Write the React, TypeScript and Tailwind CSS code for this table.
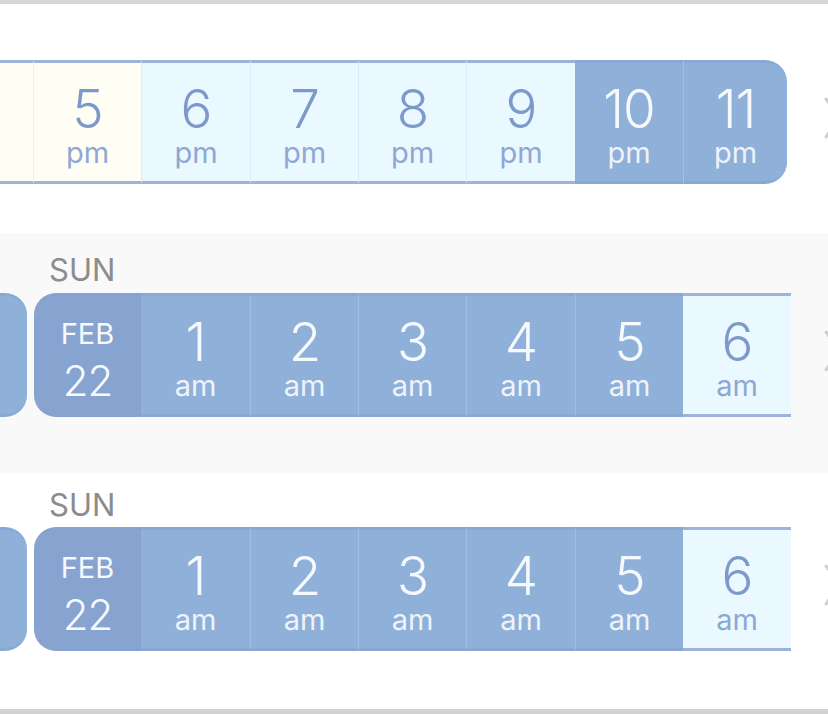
import React from "react";

type Tone = "yellow" | "light" | "dark" | "date";

interface Cell {
  top: string;
  sub: string;
  tone: Tone;
  cls: string;
}

const toneCls: Record<Tone, string> = {
  yellow: "bg-[#fffef4] border-y-[#9cb4da] text-[#7d99ca]",
  light: "bg-[#eaf8ff] border-y-[#9cb4da] text-[#7d99ca]",
  dark: "bg-[#8fb0d8] border-y-[#89a9d3] text-[#f6f9fd]",
  date: "bg-[#87a3cf] border-y-[#86a2ce] text-[#f6f9fd]",
};

const subCls: Record<Tone, string> = {
  yellow: "text-[#8ea7d3]",
  light: "text-[#8ea7d3]",
  dark: "text-[#eef3fb]",
  date: "text-[#eef3fb]",
};

const evening: Cell[] = [
  { top: "4", sub: "pm", tone: "yellow", cls: "w-[108px]" },
  { top: "5", sub: "pm", tone: "yellow", cls: "w-[108px] border-l border-l-[#f1f1e4]" },
  { top: "6", sub: "pm", tone: "light", cls: "w-[109px] border-l border-l-[#dcedf8]" },
  { top: "7", sub: "pm", tone: "light", cls: "w-[108px] border-l border-l-[#dcedf8]" },
  { top: "8", sub: "pm", tone: "light", cls: "w-[108px] border-l border-l-[#dcedf8]" },
  { top: "9", sub: "pm", tone: "light", cls: "w-[109px] border-l border-l-[#dcedf8]" },
  { top: "10", sub: "pm", tone: "dark", cls: "w-[108px]" },
  { top: "11", sub: "pm", tone: "dark", cls: "w-[104px] rounded-r-[22px] border-l border-l-[#a4bee1]" },
];

const night: Cell[] = [
  { top: "", sub: "", tone: "dark", cls: "w-[102px] mr-[7px] rounded-r-[22px]" },
  { top: "FEB", sub: "22", tone: "date", cls: "w-[107px] rounded-l-[22px]" },
  { top: "1", sub: "am", tone: "dark", cls: "w-[109px]" },
  { top: "2", sub: "am", tone: "dark", cls: "w-[108px] border-l border-l-[#a4bee1]" },
  { top: "3", sub: "am", tone: "dark", cls: "w-[108px] border-l border-l-[#a4bee1]" },
  { top: "4", sub: "am", tone: "dark", cls: "w-[109px] border-l border-l-[#a4bee1]" },
  { top: "5", sub: "am", tone: "dark", cls: "w-[108px] border-l border-l-[#a4bee1]" },
  { top: "6", sub: "am", tone: "light", cls: "w-[108px]" },
];

function HourCell({ cell }: { cell: Cell }) {
  const base = "flex h-[124px] shrink-0 flex-col items-center border-y-[3px] leading-none";
  if (cell.tone === "date") {
    return (
      <div className={`${base} ${toneCls.date} ${cell.cls} pt-[23px]`}>
        <span className="text-[29px] leading-[30px]">{cell.top}</span>
        <span className="mt-[10px] text-[42px] font-light leading-[43px] tracking-[-1px]">{cell.sub}</span>
      </div>
    );
  }
  return (
    <div className={`${base} ${toneCls[cell.tone]} ${cell.cls} pt-[19px]`}>
      <span className="text-[53px] font-light leading-[54px] tracking-[-1px]">{cell.top}</span>
      <span className={`mt-[1px] text-[29px] leading-[31px] ${subCls[cell.tone]}`}>{cell.sub}</span>
    </div>
  );
}

function Chevron() {
  return (
    <svg width="20" height="48" viewBox="0 0 20 48" className="shrink-0">
      <path d="M3 4 L16 22 L3 42" fill="none" stroke="#cfcfcf" strokeWidth="3" strokeLinecap="round" strokeLinejoin="round" />
    </svg>
  );
}

function Strip({ cells }: { cells: Cell[] }) {
  return (
    <div className="flex items-center">
      <div className="ml-[-75px] flex w-[895px] shrink-0">
        {cells.map((c, i) => (
          <HourCell key={i} cell={c} />
        ))}
      </div>
      <div className="ml-[3px] mb-[6px]">
        <Chevron />
      </div>
    </div>
  );
}

export default function App() {
  return (
    <div
      className="flex h-[714px] w-[828px] flex-col overflow-hidden border-t-4 border-b-[5px] border-t-[#d6d6d6] border-b-[#d2d2d2] bg-white"
      style={{ fontFamily: 'Inter, "Liberation Sans", Arial, sans-serif' }}
    >
      <section className="h-[229px] shrink-0 pt-[56px]">
        <Strip cells={evening} />
      </section>

      <section className="h-[240px] shrink-0 bg-[#f9f9f9] pt-[21px]">
        <div className="pl-[49px] text-[31px] leading-[32px] text-[#8c8c8c]">SUN</div>
        <div className="mt-[7px]">
          <Strip cells={night} />
        </div>
      </section>

      <section className="flex-1 pt-[16px]">
        <div className="pl-[49px] text-[31px] leading-[32px] text-[#8c8c8c]">SUN</div>
        <div className="mt-[6px]">
          <Strip cells={night} />
        </div>
      </section>
    </div>
  );
}
